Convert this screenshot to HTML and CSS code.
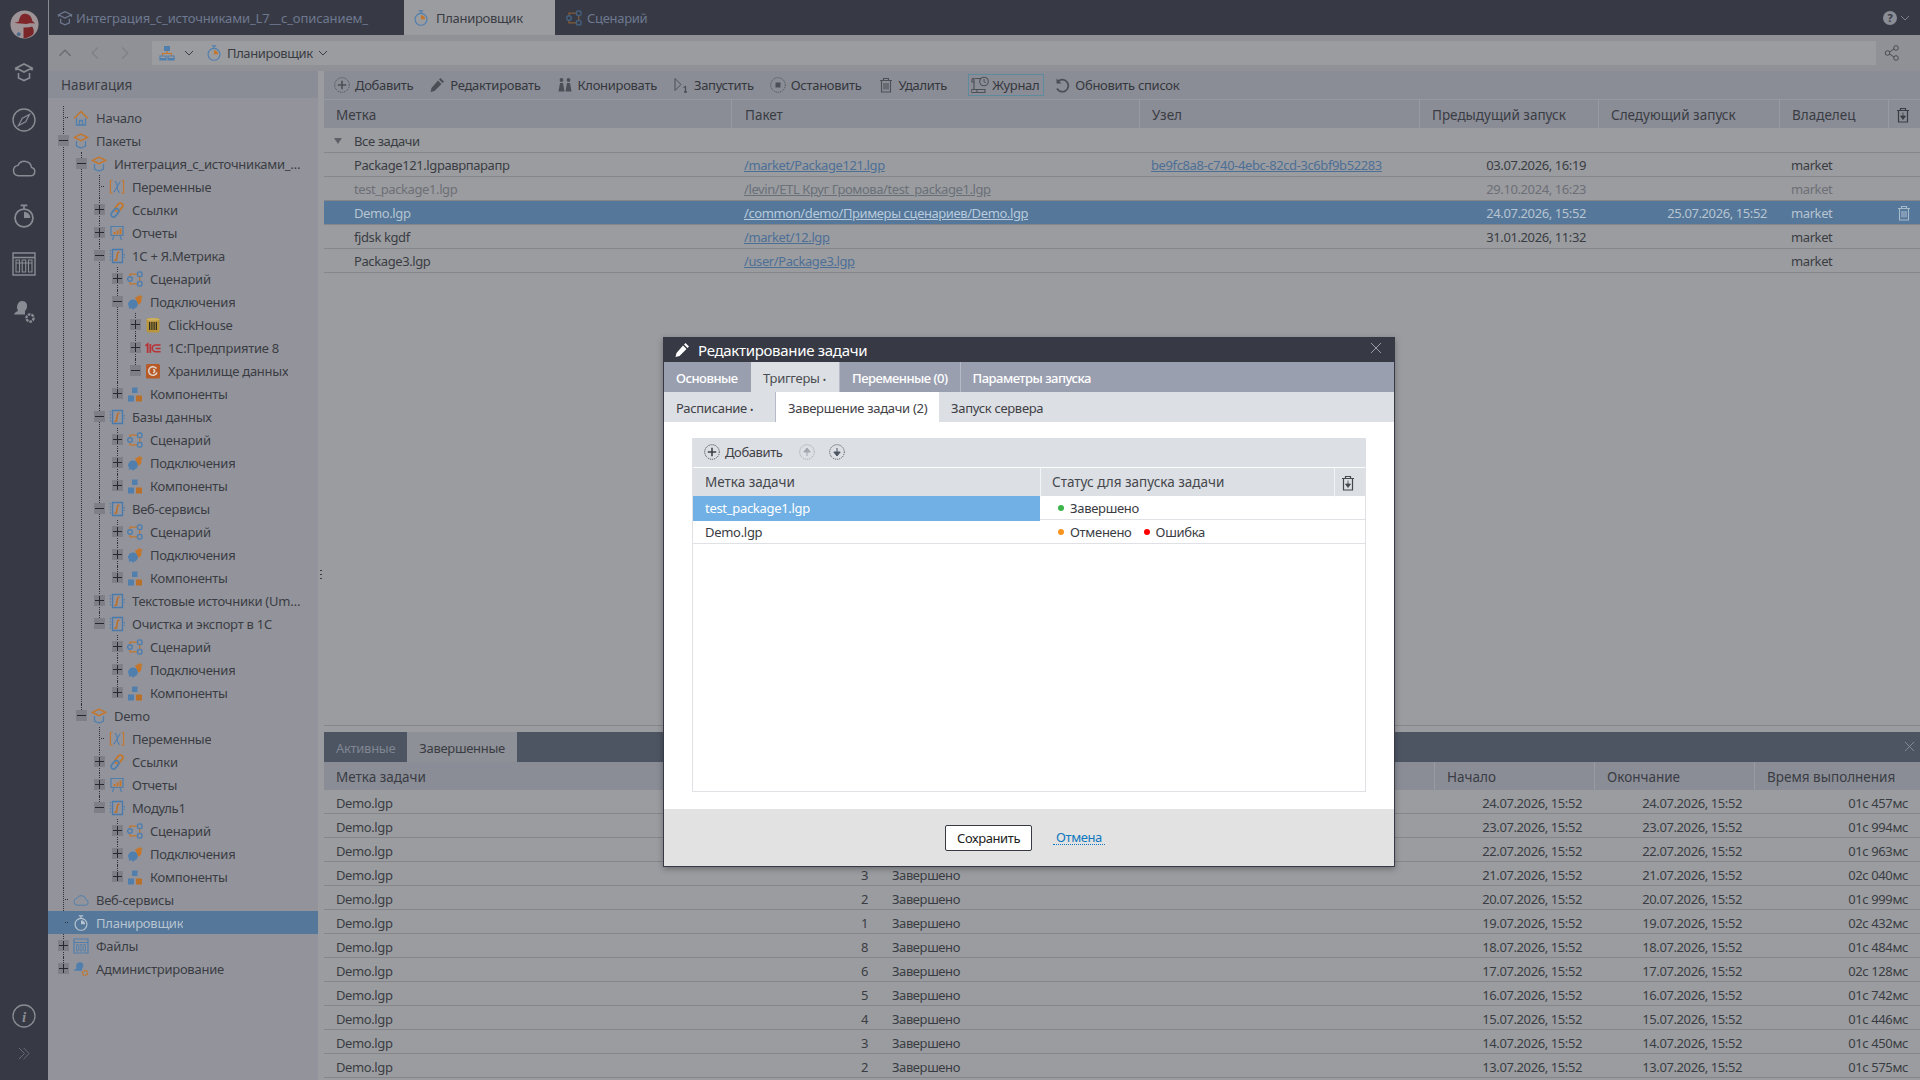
FILE: index.html
```html
<!DOCTYPE html>
<html lang="ru">

<head>
    <meta charset="UTF-8">
    <meta name="viewport" content="width=device-width, initial-scale=1.0">
    <title>Планировщик</title>
    <link rel="stylesheet" href="styles.css">
</head>

<body>
    <svg class="sprite" xmlns="http://www.w3.org/2000/svg">
        <symbol id="pack" viewBox="0 0 16 16"><path d="M1.500 4.300 8 1l6.500 3.300L8 7.600z" fill="none" stroke="#c4762c" stroke-width="1.500"/><path d="M3.500 8v5l4.500 2 4.500-2V8" fill="none" stroke="#507fae" stroke-width="1.300"/></symbol>
        <symbol id="home" viewBox="0 0 16 16"><path d="M1 8.500 8 1.500l7 7" fill="none" stroke="#c4762c" stroke-width="1.500"/><path d="M3.500 8v7h9V8M6.500 15v-4.500h3V15" fill="none" stroke="#507fae" stroke-width="1.300"/></symbol>
        <symbol id="vars" viewBox="0 0 18 16"><path d="M4 1H1.500v14H4M14 1h2.500v14H14" fill="none" stroke="#c4762c" stroke-width="1.300"/><path d="M5.500 14 12.500 2M6.500 2c2 0 2 1 2.500 5s1 7 3 7" fill="none" stroke="#507fae" stroke-width="1.300"/></symbol>
        <symbol id="link" viewBox="0 0 16 16"><rect x="7.500" y=".5" width="5" height="9.500" rx="2.500" transform="rotate(40 10 5.250)" fill="none" stroke="#c4762c" stroke-width="1.700"/><rect x="3.500" y="6" width="5" height="9.500" rx="2.500" transform="rotate(40 6 10.750)" fill="none" stroke="#507fae" stroke-width="1.700"/></symbol>
        <symbol id="report" viewBox="0 0 16 16"><path d="M1 1.500h14M2 2v8.500h12V2M5 10.500 3.500 15M11 10.500l1.500 4.500" fill="none" stroke="#507fae" stroke-width="1.200"/><path d="M4.500 7h2v2.500h-2zM7.500 5.500h2v4h-2zM10.500 3.500h2v6h-2z" fill="#c4762c"/></symbol>
        <symbol id="module" viewBox="0 0 16 16"><path d="M3.500 1.500h10v13h-10z" fill="none" stroke="#4a7aab" stroke-width="1.400"/><path d="M1.300 2v12M15.300 6v4" stroke="#4a7aab" stroke-dasharray="1.500 1.500"/><path d="M10.500 4.300C8.800 3.700 8.500 5 8.300 6.500L7.700 10.500C7.400 12 7 12.700 5.500 12" fill="none" stroke="#bf6d22" stroke-width="1.500"/></symbol>
        <symbol id="flow" viewBox="0 0 16 16"><path d="M3 5V3.200h7M3 11v1.800h7M12.700 6v4" fill="none" stroke="#c4762c" stroke-width="1.300"/><circle cx="3" cy="8" r="2.300" fill="none" stroke="#507fae" stroke-width="1.500"/><rect x="10.500" y="1" width="4.500" height="4.500" rx="1.600" fill="none" stroke="#507fae" stroke-width="1.500"/><rect x="10.500" y="10.500" width="4.500" height="4.500" rx="1.600" fill="none" stroke="#507fae" stroke-width="1.500"/></symbol>
        <symbol id="plug" viewBox="0 0 16 16"><path d="M8 3.500c2-.5 3.500-1 4.500-3 .3 1.200 1 1.800 3 2-1 1.500-1.200 3-1.200 4.500 0 2-1.500 3.500-3.300 3.500z" fill="#c4762c"/><circle cx="6" cy="10.200" r="4.800" fill="#507fae"/><path d="M2 14.500l1.500-1.500M1 10h2M6 15.500V14" stroke="#507fae" stroke-width="1.500"/></symbol>
        <symbol id="click" viewBox="0 0 16 16"><rect x="1.500" y="1" width="13" height="14.500" rx="2.200" fill="#b9953c"/><ellipse cx="8" cy="2.400" rx="6.500" ry="1.400" fill="#cdb060"/><path d="M4.500 5v8M6.200 5v8M8 5v8M9.800 5v8M11.500 5v8" stroke="#2f2c22"/></symbol>
        <symbol id="onec" viewBox="0 0 18 16"><path d="M.5 5.500 3 3.500V13.500" fill="none" stroke="#b83236" stroke-width="2"/><path d="M6 3.500V13.500" stroke="#b83236" stroke-width="2"/><path d="M17.500 4.500H12a3.800 3.800 0 0 0 0 7.600h5.500M17.500 8.500H12" fill="none" stroke="#b83236" stroke-width="1.700"/></symbol>
        <symbol id="store" viewBox="0 0 16 16"><rect x="1" y="1" width="14" height="14.500" rx="1.500" fill="#b85a26"/><path d="M11.500 5.500A4.300 4.300 0 1 0 12 9.500M8 6.500c2.300 0 2.300 3 0 3" fill="none" stroke="#dfd0c8" stroke-width="1.600"/></symbol>
        <symbol id="comps" viewBox="0 0 16 16"><path d="M5 1.500h5.500V7H5zM1 9.500h6v6H1z" fill="#507fae"/><path d="M9 9.500h6v6H9z" fill="#b9702a"/></symbol>
        <symbol id="cloud" viewBox="0 0 20 16"><path d="M5 14.500h10.500a3.500 3.500 0 0 0 .8-6.900A6 6 0 0 0 5 5.800a4.400 4.400 0 0 0 0 8.700z" fill="none" stroke="currentColor" stroke-width="1.200"/></symbol>
        <symbol id="timer" viewBox="0 0 16 18"><circle cx="8" cy="10.500" r="6.700" fill="none" stroke="currentColor" stroke-width="1.300"/><path d="M5.500 1h5M8 1v2.500" fill="none" stroke="currentColor" stroke-width="1.300"/><path d="M8 10.500V5.800a4.700 4.700 0 0 1 4.700 4.700z" style="fill:var(--sec,currentColor)"/></symbol>
        <symbol id="files" viewBox="0 0 16 16"><path d="M1 1h14v14H1zM1 4.500h14" fill="none" stroke="#507fae" stroke-width="1.200"/><path d="M3.500 6.500h1.800v6.500H3.500zM7.100 6.500h1.800v6.500H7.100zM10.700 6.500h1.800v6.500h-1.800z" fill="none" stroke="#507fae" stroke-width=".8"/></symbol>
        <symbol id="admin" viewBox="0 0 18 18"><path d="M8 1.500c3 0 4 2 3.500 4.500-.3 1.500-1 2.500-1.500 3v2H1c.5-1.500 2-2 3-2.500L3.500 6C3.500 3 5.500 1.500 8 1.500z" fill="#507fae"/><circle cx="13.500" cy="13.500" r="2.800" fill="none" stroke="#c4762c" stroke-width="1.800" stroke-dasharray="2 .8"/></symbol>
        <symbol id="pack-mono" viewBox="0 0 20 20"><path d="M2 6 10 2l8 4-8 4zM2 6v2.500M18 6v2.500" fill="none" stroke="currentColor" stroke-width="1.600"/><path d="M4.500 11v5l5.500 2.500 5.500-2.500v-5" fill="none" stroke="currentColor" stroke-width="1.600"/></symbol>
        <symbol id="compass" viewBox="0 0 24 24"><circle cx="12" cy="12" r="11" fill="none" stroke="currentColor" stroke-width="1.400"/><path d="M17.500 6.500 13.700 13.700 6.500 17.500 10.300 10.300z" fill="none" stroke="currentColor" stroke-width="1.200"/></symbol>
        <symbol id="table" viewBox="0 0 24 24"><path d="M1 1h22v22H1zM1 5.500h22" fill="none" stroke="currentColor" stroke-width="1.400"/><path d="M4 8h3.500v12H4zM10.200 8h3.500v12h-3.500zM16.500 8H20v12h-3.500zM4 11h16" fill="none" stroke="currentColor" stroke-width="1.100"/></symbol>
        <symbol id="admin-mono" viewBox="0 0 24 24"><path d="M10 1c4 0 5.500 3 5 6-.3 2-1.200 3-2 4v3.500H2c.5-2 2.500-2.800 4-3.500L5 8C5 4 7 1 10 1z" fill="currentColor"/><circle cx="18" cy="18" r="3.600" fill="none" stroke="currentColor" stroke-width="2.400" stroke-dasharray="2.600 1"/></symbol>
        <symbol id="add" viewBox="0 0 16 16"><circle cx="8" cy="8" r="7.300" fill="none" stroke="currentColor" stroke-dasharray="1.100 1"/><path d="M8 3.800v8.400M3.800 8h8.400" stroke="currentColor" stroke-width="1.600"/></symbol>
        <symbol id="edit" viewBox="0 0 16 16"><path d="M11.500 1 15 4.500l-1.500 1.500L10 2.500zM9 3.500 12.500 7l-7 7L1.500 15l1-4z" fill="currentColor"/></symbol>
        <symbol id="clone" viewBox="0 0 16 16"><circle cx="4.500" cy="3" r="1.900" fill="currentColor"/><circle cx="11.500" cy="3" r="1.900" fill="currentColor"/><path d="M3 6h3l1.500 8.500h-6zM10 6h3l1.500 8.500h-6z" fill="currentColor"/></symbol>
        <symbol id="run" viewBox="0 0 16 16"><path d="M2 1.500 8 7.500 2 13.500z" fill="none" stroke="currentColor"/><path d="M10.500 10.500 12.500 9.500v5.500M11 15h3" fill="none" stroke="currentColor" stroke-width="1.300"/></symbol>
        <symbol id="stop" viewBox="0 0 16 16"><circle cx="8" cy="8" r="7.300" fill="none" stroke="currentColor" stroke-dasharray="1.100 1"/><rect x="5.500" y="5.500" width="5" height="5" fill="currentColor"/></symbol>
        <symbol id="trash" viewBox="0 0 16 16"><path d="M2 3.500h12M5.500 3.500V1.500h5v2M3.500 3.500v11.500h9V3.500M6 6v6.500M8 6v6.500M10 6v6.500" fill="none" stroke="currentColor" stroke-width="1.100"/></symbol>
        <symbol id="trash-down" viewBox="0 0 16 16"><path d="M2 3.500h12M5.500 3.500V1.500h5v2M3.500 3.500v11.500h9V3.500" fill="none" stroke="currentColor" stroke-width="1.200"/><path d="M8 5.500v4M5.500 9h5L8 12.500z" fill="currentColor" stroke="currentColor" stroke-width=".8"/></symbol>
        <symbol id="journal" viewBox="0 0 18 18"><path d="M4 2.500h6M3 2.500v11M3 2.500a1.500 1.500 0 0 0-2 1.500v2h2M6 13.500v3H1.500a1.500 1.500 0 0 1 0-3H14v3H6" fill="none" stroke="currentColor" stroke-width="1.100"/><circle cx="13" cy="5.500" r="4.300" fill="#8a8d96" stroke="currentColor" stroke-width="1.100"/><path d="M13 3v2.800l1.800 1" fill="none" stroke="currentColor"/></symbol>
        <symbol id="refresh" viewBox="0 0 16 16"><path d="M4 4.500a6 6 0 1 1-1 7" fill="none" stroke="currentColor" stroke-width="1.800"/><path d="M2.500 1.500v5h5z" fill="currentColor"/></symbol>
        <symbol id="struct" viewBox="0 0 16 16"><path d="M5 1h6v5H5z" fill="#507fae"/><path d="M8 6v2.500M3.500 11V8.500h9V11" fill="none" stroke="#c4762c" stroke-width="1.100"/><path d="M1 11h6v4H1zM9 11h6v4H9z" fill="none" stroke="#507fae" stroke-width="1.200"/><path d="M1 13h6v2H1zM9 13h6v2H9z" fill="#507fae"/></symbol>
        <symbol id="share" viewBox="0 0 16 16"><circle cx="3.500" cy="8" r="2.300" fill="none" stroke="currentColor"/><circle cx="12" cy="3" r="2.300" fill="none" stroke="currentColor"/><circle cx="12" cy="13" r="2.300" fill="none" stroke="currentColor"/><path d="M5.500 7 10 4M5.500 9l4.500 3" stroke="currentColor"/></symbol>
        <symbol id="chev-down" viewBox="0 0 10 10"><path d="M1 3l4 4 4-4" fill="none" stroke="currentColor"/></symbol>
        <symbol id="arrow-up" viewBox="0 0 16 16"><circle cx="8" cy="8" r="7.300" fill="none" stroke="currentColor" stroke-dasharray="1.100 1"/><path d="M8 12V7M4.800 8 8 4l3.200 4z" fill="currentColor" stroke="currentColor"/></symbol>
        <symbol id="arrow-down" viewBox="0 0 16 16"><circle cx="8" cy="8" r="7.300" fill="none" stroke="currentColor" stroke-dasharray="1.100 1"/><path d="M8 4v5M4.800 8 8 12l3.200-4z" fill="currentColor" stroke="currentColor"/></symbol>
        <symbol id="cross" viewBox="0 0 12 12"><path d="M1 1l10 10M11 1 1 11" fill="none" stroke="currentColor"/></symbol>
    </svg>

    <!-- левая полоса -->
    <aside class="rail">
        <svg class="rail_logo" viewBox="0 0 30 30">
            <circle cx="15" cy="15" r="14.500" fill="#9e9497"/>
            <path d="M4 13c2 0 4 0 5-1 1-5 3-8 6-8 4 0 7 2 8 7l3 3c-3-.5-7-.5-9 .5-3 0-9-.5-13-1.500z" fill="#7e2629"/>
            <path d="M14 18c3 .5 6 0 9-1 2 3 2 6 1 8-3 3-7 4-10 4z" fill="#7a2629"/>
            <circle cx="9" cy="25" r="2" fill="#4d6a8a"/>
        </svg>
        <a class="rail_item"><svg class="icon_20"><use href="#pack-mono"/></svg></a>
        <a class="rail_item"><svg class="icon_24"><use href="#compass"/></svg></a>
        <a class="rail_item"><svg class="icon_24"><use href="#cloud"/></svg></a>
        <a class="rail_item"><svg class="icon_24"><use href="#timer"/></svg></a>
        <a class="rail_item"><svg class="icon_24"><use href="#table"/></svg></a>
        <a class="rail_item"><svg class="icon_24"><use href="#admin-mono"/></svg></a>
        <div class="rail_bottom">
            <svg class="icon_24" viewBox="0 0 24 24">
                <circle cx="12" cy="12" r="11" fill="none" stroke="currentColor" stroke-width="1.300"/>
                <text x="12" y="17.500" text-anchor="middle" class="info_i">i</text>
            </svg>
            <svg class="rail_more" viewBox="0 0 14 14"><path d="M1 1l6 6-6 6M6 1l6 6-6 6" fill="none" stroke="currentColor"/></svg>
        </div>
    </aside>

    <div class="app">
        <div class="tabs">
            <div class="tab first"><svg class="icon_16"><use href="#pack-mono"/></svg><span>Интеграция_с_источниками_L7__с_описанием_</span></div>
            <div class="tab current"><svg class="icon_16 planner"><use href="#timer"/></svg><span>Планировщик</span></div>
            <div class="tab last"><svg class="icon_16 dim"><use href="#flow"/></svg><span>Сценарий</span></div>
            <div class="tabs_help"><b>?</b><svg class="chev"><use href="#chev-down"/></svg></div>
        </div>

        <div class="address">
            <div class="address_nav">
                <svg class="chev big up"><use href="#chev-down"/></svg>
                <svg class="chev big left"><use href="#chev-down"/></svg>
                <svg class="chev big right"><use href="#chev-down"/></svg>
            </div>
            <div class="address_bar">
                <svg class="icon_16"><use href="#struct"/></svg>
                <svg class="chev first_chev"><use href="#chev-down"/></svg>
                <svg class="icon_16 planner"><use href="#timer"/></svg>
                <span>Планировщик</span>
                <svg class="chev"><use href="#chev-down"/></svg>
            </div>
            <svg class="icon_16 share"><use href="#share"/></svg>
        </div>

        <div class="workspace">
            <nav class="nav">
                <div class="nav_title">Навигация</div>
                <ul class="tree">
                    <li><div class="node"><i class="stub"></i><svg class="ic"><use href="#home"/></svg><span>Начало</span></div></li>
                    <li><div class="node"><i class="tog minus"></i><svg class="ic"><use href="#pack"/></svg><span>Пакеты</span></div>
                        <ul>
                            <li><div class="node"><i class="tog minus"></i><svg class="ic"><use href="#pack"/></svg><span>Интеграция_с_источниками_L7__с_описанием_</span></div>
                                <ul>
                                    <li><div class="node"><i class="stub"></i><svg class="ic"><use href="#vars"/></svg><span>Переменные</span></div></li>
                                    <li><div class="node"><i class="tog"></i><svg class="ic"><use href="#link"/></svg><span>Ссылки</span></div></li>
                                    <li><div class="node"><i class="tog"></i><svg class="ic"><use href="#report"/></svg><span>Отчеты</span></div></li>
                                    <li><div class="node"><i class="tog minus"></i><svg class="ic"><use href="#module"/></svg><span>1С + Я.Метрика</span></div>
                                        <ul>
                                            <li><div class="node"><i class="tog"></i><svg class="ic"><use href="#flow"/></svg><span>Сценарий</span></div></li>
                                            <li><div class="node"><i class="tog minus"></i><svg class="ic"><use href="#plug"/></svg><span>Подключения</span></div>
                                                <ul>
                                                    <li><div class="node"><i class="tog"></i><svg class="ic"><use href="#click"/></svg><span>ClickHouse</span></div></li>
                                                    <li><div class="node"><i class="tog"></i><svg class="ic"><use href="#onec"/></svg><span>1С:Предприятие 8</span></div></li>
                                                    <li><div class="node"><i class="tog minus"></i><svg class="ic"><use href="#store"/></svg><span>Хранилище данных</span></div></li>
                                                </ul>
                                            </li>
                                            <li><div class="node"><i class="tog"></i><svg class="ic"><use href="#comps"/></svg><span>Компоненты</span></div></li>
                                        </ul>
                                    </li>
                                    <li><div class="node"><i class="tog minus"></i><svg class="ic"><use href="#module"/></svg><span>Базы данных</span></div>
                                        <ul>
                                            <li><div class="node"><i class="tog"></i><svg class="ic"><use href="#flow"/></svg><span>Сценарий</span></div></li>
                                            <li><div class="node"><i class="tog"></i><svg class="ic"><use href="#plug"/></svg><span>Подключения</span></div></li>
                                            <li><div class="node"><i class="tog"></i><svg class="ic"><use href="#comps"/></svg><span>Компоненты</span></div></li>
                                        </ul>
                                    </li>
                                    <li><div class="node"><i class="tog minus"></i><svg class="ic"><use href="#module"/></svg><span>Веб-сервисы</span></div>
                                        <ul>
                                            <li><div class="node"><i class="tog"></i><svg class="ic"><use href="#flow"/></svg><span>Сценарий</span></div></li>
                                            <li><div class="node"><i class="tog"></i><svg class="ic"><use href="#plug"/></svg><span>Подключения</span></div></li>
                                            <li><div class="node"><i class="tog"></i><svg class="ic"><use href="#comps"/></svg><span>Компоненты</span></div></li>
                                        </ul>
                                    </li>
                                    <li><div class="node"><i class="tog"></i><svg class="ic"><use href="#module"/></svg><span>Текстовые источники (Umbrella)</span></div></li>
                                    <li><div class="node"><i class="tog minus"></i><svg class="ic"><use href="#module"/></svg><span>Очистка и экспорт в 1С</span></div>
                                        <ul>
                                            <li><div class="node"><i class="tog"></i><svg class="ic"><use href="#flow"/></svg><span>Сценарий</span></div></li>
                                            <li><div class="node"><i class="tog"></i><svg class="ic"><use href="#plug"/></svg><span>Подключения</span></div></li>
                                            <li><div class="node"><i class="tog"></i><svg class="ic"><use href="#comps"/></svg><span>Компоненты</span></div></li>
                                        </ul>
                                    </li>
                                </ul>
                            </li>
                            <li><div class="node"><i class="tog minus"></i><svg class="ic"><use href="#pack"/></svg><span>Demo</span></div>
                                <ul>
                                    <li><div class="node"><i class="stub"></i><svg class="ic"><use href="#vars"/></svg><span>Переменные</span></div></li>
                                    <li><div class="node"><i class="tog"></i><svg class="ic"><use href="#link"/></svg><span>Ссылки</span></div></li>
                                    <li><div class="node"><i class="tog"></i><svg class="ic"><use href="#report"/></svg><span>Отчеты</span></div></li>
                                    <li><div class="node"><i class="tog minus"></i><svg class="ic"><use href="#module"/></svg><span>Модуль1</span></div>
                                        <ul>
                                            <li><div class="node"><i class="tog"></i><svg class="ic"><use href="#flow"/></svg><span>Сценарий</span></div></li>
                                            <li><div class="node"><i class="tog"></i><svg class="ic"><use href="#plug"/></svg><span>Подключения</span></div></li>
                                            <li><div class="node"><i class="tog"></i><svg class="ic"><use href="#comps"/></svg><span>Компоненты</span></div></li>
                                        </ul>
                                    </li>
                                </ul>
                            </li>
                        </ul>
                    </li>
                    <li><div class="node"><i class="stub"></i><svg class="ic tree_blue"><use href="#cloud"/></svg><span>Веб-сервисы</span></div></li>
                    <li><div class="node current"><i class="stub"></i><svg class="ic"><use href="#timer"/></svg><span>Планировщик</span></div></li>
                    <li><div class="node"><i class="tog"></i><svg class="ic"><use href="#files"/></svg><span>Файлы</span></div></li>
                    <li><div class="node"><i class="tog"></i><svg class="ic"><use href="#admin"/></svg><span>Администрирование</span></div></li>
                </ul>
            </nav>

            <div class="splitter"></div>

            <main class="main">
                <section class="jobs">
                    <div class="toolbar">
                        <a class="tool"><svg class="icon_16"><use href="#add"/></svg>Добавить</a>
                        <a class="tool"><svg class="icon_16"><use href="#edit"/></svg>Редактировать</a>
                        <a class="tool"><svg class="icon_16"><use href="#clone"/></svg>Клонировать</a>
                        <a class="tool"><svg class="icon_16"><use href="#run"/></svg>Запустить</a>
                        <a class="tool"><svg class="icon_16"><use href="#stop"/></svg>Остановить</a>
                        <a class="tool"><svg class="icon_16"><use href="#trash"/></svg>Удалить</a>
                        <a class="tool pressed"><svg class="icon_18"><use href="#journal"/></svg>Журнал</a>
                        <a class="tool"><svg class="icon_16"><use href="#refresh"/></svg>Обновить список</a>
                    </div>
                    <div class="row head jobs_cols">
                        <div>Метка</div><div>Пакет</div><div>Узел</div><div>Предыдущий запуск</div><div>Следующий запуск</div><div>Владелец</div>
                        <div class="cell_icon"><svg class="icon_16"><use href="#trash-down"/></svg></div>
                    </div>
                    <div class="row group"><i class="caret"></i>Все задачи</div>
                    <div class="row jobs_cols">
                        <div class="indent">Package121.lgpаврпарапр</div><div><a href="#">/market/Package121.lgp</a></div><div><a href="#">be9fc8a8-c740-4ebc-82cd-3c6bf9b52283</a></div><div class="num">03.07.2026, 16:19</div><div></div><div>market</div><div></div>
                    </div>
                    <div class="row jobs_cols muted">
                        <div class="indent">test_package1.lgp</div><div><a href="#">/levin/ETL Круг Громова/test_package1.lgp</a></div><div></div><div class="num">29.10.2024, 16:23</div><div></div><div>market</div><div></div>
                    </div>
                    <div class="row jobs_cols selected">
                        <div class="indent">Demo.lgp</div><div><a href="#">/common/demo/Примеры сценариев/Demo.lgp</a></div><div></div><div class="num">24.07.2026, 15:52</div><div class="num">25.07.2026, 15:52</div><div>market</div>
                        <div class="cell_icon"><svg class="icon_16"><use href="#trash"/></svg></div>
                    </div>
                    <div class="row jobs_cols">
                        <div class="indent">fjdsk kgdf</div><div><a href="#">/market/12.lgp</a></div><div></div><div class="num">31.01.2026, 11:32</div><div></div><div>market</div><div></div>
                    </div>
                    <div class="row jobs_cols">
                        <div class="indent">Package3.lgp</div><div><a href="#">/user/Package3.lgp</a></div><div></div><div></div><div></div><div>market</div><div></div>
                    </div>
                </section>

                <section class="history">
                    <div class="history_tabs">
                        <div class="history_tab">Активные</div>
                        <div class="history_tab current">Завершенные</div>
                        <svg class="history_close"><use href="#cross"/></svg>
                    </div>
                    <div class="row head history_cols">
                        <div>Метка задачи</div><div></div><div></div><div>Начало</div><div>Окончание</div><div>Время выполнения</div>
                    </div>
                    <div class="row history_cols"><div>Demo.lgp</div><div></div><div></div><div class="num">24.07.2026, 15:52</div><div class="num">24.07.2026, 15:52</div><div class="num">01с 457мс</div></div>
                    <div class="row history_cols"><div>Demo.lgp</div><div></div><div></div><div class="num">23.07.2026, 15:52</div><div class="num">23.07.2026, 15:52</div><div class="num">01с 994мс</div></div>
                    <div class="row history_cols"><div>Demo.lgp</div><div></div><div></div><div class="num">22.07.2026, 15:52</div><div class="num">22.07.2026, 15:52</div><div class="num">01с 963мс</div></div>
                    <div class="row history_cols"><div>Demo.lgp</div><div class="num">3</div><div>Завершено</div><div class="num">21.07.2026, 15:52</div><div class="num">21.07.2026, 15:52</div><div class="num">02с 040мс</div></div>
                    <div class="row history_cols"><div>Demo.lgp</div><div class="num">2</div><div>Завершено</div><div class="num">20.07.2026, 15:52</div><div class="num">20.07.2026, 15:52</div><div class="num">01с 999мс</div></div>
                    <div class="row history_cols"><div>Demo.lgp</div><div class="num">1</div><div>Завершено</div><div class="num">19.07.2026, 15:52</div><div class="num">19.07.2026, 15:52</div><div class="num">02с 432мс</div></div>
                    <div class="row history_cols"><div>Demo.lgp</div><div class="num">8</div><div>Завершено</div><div class="num">18.07.2026, 15:52</div><div class="num">18.07.2026, 15:52</div><div class="num">01с 484мс</div></div>
                    <div class="row history_cols"><div>Demo.lgp</div><div class="num">6</div><div>Завершено</div><div class="num">17.07.2026, 15:52</div><div class="num">17.07.2026, 15:52</div><div class="num">02с 128мс</div></div>
                    <div class="row history_cols"><div>Demo.lgp</div><div class="num">5</div><div>Завершено</div><div class="num">16.07.2026, 15:52</div><div class="num">16.07.2026, 15:52</div><div class="num">01с 742мс</div></div>
                    <div class="row history_cols"><div>Demo.lgp</div><div class="num">4</div><div>Завершено</div><div class="num">15.07.2026, 15:52</div><div class="num">15.07.2026, 15:52</div><div class="num">01с 446мс</div></div>
                    <div class="row history_cols"><div>Demo.lgp</div><div class="num">3</div><div>Завершено</div><div class="num">14.07.2026, 15:52</div><div class="num">14.07.2026, 15:52</div><div class="num">01с 450мс</div></div>
                    <div class="row history_cols"><div>Demo.lgp</div><div class="num">2</div><div>Завершено</div><div class="num">13.07.2026, 15:52</div><div class="num">13.07.2026, 15:52</div><div class="num">01с 575мс</div></div>
                </section>
            </main>
        </div>
    </div>

    <!-- окно редактирования -->
    <div class="modal">
        <div class="modal_head">
            <svg class="icon_16"><use href="#edit"/></svg>
            <span>Редактирование задачи</span>
            <svg class="modal_close"><use href="#cross"/></svg>
        </div>
        <div class="modal_tabs">
            <div class="mtab first">Основные</div>
            <div class="mtab current">Триггеры <small>•</small></div>
            <div class="mtab">Переменные (0)</div>
            <div class="mtab">Параметры запуска</div>
        </div>
        <div class="modal_subtabs">
            <div class="stab first">Расписание <small>•</small></div>
            <div class="stab current">Завершение задачи (2)</div>
            <div class="stab">Запуск сервера</div>
        </div>
        <div class="modal_body">
            <div class="list">
                <div class="list_tools">
                    <a class="list_add"><svg class="icon_16"><use href="#add"/></svg>Добавить</a>
                    <svg class="icon_16 off"><use href="#arrow-up"/></svg>
                    <svg class="icon_16"><use href="#arrow-down"/></svg>
                </div>
                <div class="list_row list_head">
                    <div>Метка задачи</div><div>Статус для запуска задачи</div>
                    <div class="cell_icon"><svg class="icon_16"><use href="#trash-down"/></svg></div>
                </div>
                <div class="list_row">
                    <div class="picked">test_package1.lgp</div>
                    <div class="statuses"><span class="status ok">Завершено</span></div><div></div>
                </div>
                <div class="list_row">
                    <div>Demo.lgp</div>
                    <div class="statuses"><span class="status warn">Отменено</span><span class="status err">Ошибка</span></div><div></div>
                </div>
            </div>
        </div>
        <div class="modal_foot">
            <button class="btn">Сохранить</button>
            <a class="cancel" href="#">Отмена</a>
        </div>
    </div>
</body>

</html>
```

FILE: styles.css
```css
* {
    margin: 0;
    padding: 0;
    box-sizing: border-box;
}

li {
    list-style: none;
}

a {
    color: inherit;
}

body {
    display: flex;
    width: 1920px;
    height: 1080px;
    overflow: hidden;
    position: relative;
    font: 13px/18px "Noto Sans", sans-serif;
    letter-spacing: -.3px;
    color: #3a3c43;
    background-color: #9b9ca0;
}

.sprite {
    display: none;
}

svg {
    flex: none;
}

.icon_16 {
    width: 16px;
    height: 16px;
}

.icon_18 {
    width: 18px;
    height: 18px;
}

.icon_20 {
    width: 20px;
    height: 20px;
}

.icon_24 {
    width: 24px;
    height: 24px;
}

/* левая полоса */
.rail {
    display: flex;
    flex-direction: column;
    align-items: center;
    width: 48px;
    height: 100%;
    background-color: #373a44;
    color: #8a8c94;
}

.rail_logo {
    width: 29px;
    height: 29px;
    margin: 10px 0 9px;
}

.rail_item {
    display: flex;
    align-items: center;
    justify-content: center;
    width: 48px;
    height: 48px;
}

.rail_bottom {
    display: flex;
    flex-direction: column;
    align-items: center;
    margin-top: auto;
    padding-bottom: 20px;
    gap: 19px;
}

.info_i {
    font: italic bold 15px "Liberation Serif", serif;
    fill: currentColor;
}

.rail_more {
    width: 13px;
    height: 13px;
    color: #6d7080;
}

.app {
    display: flex;
    flex-direction: column;
    flex: 1;
    min-width: 0;
}

/* вкладки */
.tabs {
    display: flex;
    height: 35px;
    background-color: #373a44;
    border-left: 1px solid #8a8c94;
}

.tab {
    display: flex;
    align-items: center;
    gap: 5px;
    padding: 0 11px;
    color: #6e7890;
}

.tab.first {
    width: 355px;
    padding-left: 8px;
    gap: 3px;
    letter-spacing: -.12px;
}

.tab.current {
    width: 151px;
    padding-left: 9px;
    gap: 7px;
    color: #3a3c43;
    background-color: #9b9ca0;
}

.planner {
    color: #507fae;
    --sec: #c4762c;
}

.dim {
    opacity: .55;
}

.tabs_help {
    display: flex;
    align-items: center;
    gap: 3px;
    margin-left: auto;
    padding-right: 10px;
    color: #7d808c;
}

.tabs_help b {
    width: 14px;
    height: 14px;
    border-radius: 50%;
    line-height: 14px;
    font-size: 11px;
    text-align: center;
    color: #373a44;
    background-color: #8a8c96;
}

.chev {
    width: 10px;
    height: 10px;
}

.chev.big {
    width: 14px;
    height: 14px;
    color: #6a6c73;
}

.chev.up {
    transform: rotate(180deg);
}

.chev.left {
    transform: rotate(90deg);
    color: #7f8187;
}

.chev.right {
    transform: rotate(-90deg);
    color: #7f8187;
}

/* адресная строка */
.address {
    display: flex;
    align-items: center;
    height: 36px;
    background-color: #909196;
}

.address_nav {
    display: flex;
    gap: 16px;
    width: 104px;
    padding-left: 10px;
}

.address_bar {
    display: flex;
    align-items: center;
    flex: 1;
    height: 24px;
    padding-left: 7px;
    gap: 5px;
    letter-spacing: -.4px;
    background-color: #9b9ca0;
}

.address_bar .first_chev {
    margin: 0 7px 0 4px;
}

.share {
    margin: 0 20px 0 8px;
    color: #4a4c52;
}

.workspace {
    display: flex;
    flex: 1;
    min-height: 0;
}

/* дерево */
.nav {
    width: 270px;
    background-color: #93949b;
}

.nav_title {
    height: 27px;
    padding-left: 13px;
    line-height: 28px;
    font-size: 13.5px;
    letter-spacing: 0;
    background-color: #8a8d96;
}

.tree {
    padding-top: 8px;
    letter-spacing: -.25px;
}

.tree ul {
    margin-left: 18px;
}

.tree li {
    position: relative;
}

.tree li::before {
    content: '';
    position: absolute;
    left: 15px;
    top: 0;
    bottom: 0;
    border-left: 1px dotted #2e3036;
}

.tree li:last-child::before {
    bottom: auto;
    height: 12px;
}

.node {
    display: flex;
    align-items: center;
    height: 23px;
    padding: 0 12px 0 10px;
    position: relative;
}

.node span {
    overflow: hidden;
    white-space: nowrap;
    text-overflow: ellipsis;
}

.node.current {
    color: #b8c4d0;
    background-color: #54779a;
}

.tog {
    flex: none;
    width: 11px;
    height: 11px;
    margin-right: 4px;
    background: linear-gradient(#26282d, #26282d) center/9px 1px no-repeat, linear-gradient(#26282d, #26282d) center/1px 9px no-repeat, #7f8087;
}

.tog.minus {
    background: linear-gradient(#26282d, #26282d) center/9px 1px no-repeat, #7f8087;
}

.stub {
    flex: none;
    width: 11px;
    height: 1px;
    margin-right: 4px;
    background: linear-gradient(90deg, transparent 50%, #2e3036 50%) 0 0/2px 1px;
    clip-path: inset(0 0 0 6px);
}

.ic {
    width: 16px;
    height: 16px;
    margin-right: 7px;
}

.tree_blue {
    color: #507fae;
}

.splitter {
    display: flex;
    align-items: center;
    justify-content: center;
    width: 6px;
    background-color: #9b9ca0;
}

.splitter::before {
    content: '';
    width: 2px;
    height: 12px;
    background: repeating-linear-gradient(#3a3c43 0 1px, transparent 1px 4px);
}

.main {
    display: flex;
    flex-direction: column;
    flex: 1;
    min-width: 0;
}

/* задачи */
.jobs {
    flex: 1;
    border-bottom: 1px solid #84868c;
}

.toolbar {
    display: flex;
    align-items: center;
    gap: 16px;
    height: 29px;
    padding-left: 10px;
    background-color: #8a8d96;
    border-bottom: 1px solid #9498a0;
}

.tool {
    display: flex;
    align-items: center;
    gap: 5px;
    color: #35373d;
}

.tool svg {
    color: #4d4f56;
}

.tool.pressed {
    height: 22px;
    padding: 0 4px 0 2px;
    margin: 0 -6px 0 5px;
    gap: 3px;
    border: 1px solid #5d8a9c;
}

.row {
    display: grid;
    align-items: center;
    height: 24px;
    padding-top: 1px;
    letter-spacing: -.4px;
    border-bottom: 1px solid #84868c;
}

.row > div {
    padding: 0 12px;
    white-space: nowrap;
}

.row a {
    color: #4d6f96;
}

.row .num {
    text-align: right;
}

.row .indent {
    padding-left: 30px;
}

.head {
    height: 28px;
    padding-top: 0;
    border-bottom: 0;
    align-items: stretch;
    font-size: 13.5px;
    letter-spacing: 0;
    background-color: #8a8d96;
}

.head > div {
    line-height: 30px;
    border-left: 1px solid #979aa2;
}

.head > div:first-child {
    border-left: 0;
}

.jobs_cols {
    grid-template-columns: 407px 408px 280px 179px 181px 109px 1fr;
}

.jobs_cols > div:nth-child(2) {
    padding-left: 13px;
}

.cell_icon {
    display: flex;
    align-items: center;
    justify-content: center;
    padding: 0 !important;
}

.head .cell_icon {
    padding-right: 4px !important;
}

.group {
    display: flex;
    height: 25px;
    padding-left: 10px;
}

.caret {
    width: 0;
    height: 0;
    margin-right: 12px;
    border: 4px solid transparent;
    border-top: 6px solid #5f6169;
    border-bottom: 0;
}

.muted {
    color: #6d6f76;
}

.muted a {
    color: #697078;
}

.selected {
    color: #b8c4d0;
    background-color: #54779a;
}

.selected a {
    color: #b8cadb;
}

.selected .cell_icon {
    color: #a9bacb;
}

/* нижняя панель */
.history {
    flex: none;
    height: 348px;
    margin-top: 6px;
}

.history_tabs {
    display: flex;
    height: 30px;
    color: #7f8592;
    background-color: #4d5562;
}

.history_tab {
    padding: 1px 12px 0;
    line-height: 30px;
}

.history_tab.current {
    color: #3a3c43;
    background-color: #8e9097;
}

.history_close {
    width: 11px;
    height: 11px;
    margin: 9px 5px 0 auto;
    color: #8a8f99;
}

.history .row:not(.head) {
    padding-top: 3px;
}

.history_cols {
    grid-template-columns: 400px 156px 554px 160px 160px 1fr;
}

/* окно */
.modal {
    position: absolute;
    left: 663px;
    top: 337px;
    display: flex;
    flex-direction: column;
    width: 732px;
    height: 530px;
    border: 1px solid #373a44;
    border-top: 0;
    background-color: #fff;
    box-shadow: 0 2px 6px rgba(0, 0, 0, .3);
}

.modal_head {
    display: flex;
    align-items: center;
    height: 25px;
    margin: 0 -1px;
    padding: 1px 0 0 11px;
    gap: 8px;
    font-size: 15px;
    color: #fff;
    background-color: #373a44;
}

.modal_head .icon_16 {
    margin-top: -1px;
}

.modal_close {
    width: 12px;
    height: 12px;
    margin: 0 13px 4px auto;
    color: #9a9ca4;
}

.modal_tabs {
    display: flex;
    height: 30px;
    background-color: #9a9fb0;
}

.mtab {
    padding: 1px 12px 0;
    line-height: 30px;
    font-weight: 500;
    letter-spacing: -.5px;
    color: #fff;
    border-left: 1px solid #b6bac6;
}

.mtab.first {
    width: 87px;
    border-left: 0;
}

.mtab.current {
    width: 88px;
    border-left: 0;
    font-weight: 400;
    letter-spacing: -.3px;
    color: #4a4c52;
    background-color: #dcdfe3;
}

.mtab small,
.stab small {
    font-size: 9px;
}

.modal_subtabs {
    display: flex;
    height: 30px;
    color: #3f4147;
    background-color: #dcdfe3;
}

.stab {
    padding: 1px 12px 0;
    line-height: 30px;
    white-space: nowrap;
}

.stab.first {
    width: 111px;
}

.stab.current {
    width: 164px;
    background-color: #fff;
    border-left: 1px solid #b6bac6;
}

.modal_body {
    flex: 1;
    padding: 16px 28px 17px 28px;
}

.list {
    height: 100%;
    border: 1px solid #dfe1e4;
    border-top: 0;
}

.list_tools {
    display: flex;
    align-items: center;
    gap: 14px;
    height: 29px;
    margin: 0 -1px 1px;
    padding: 0 0 1px 12px;
    color: #4d5562;
    background-color: #dcdfe3;
}

.list_add {
    display: flex;
    align-items: center;
    gap: 5px;
    margin-right: 2px;
    letter-spacing: -.4px;
    color: #3f4147;
}

.off {
    opacity: .4;
}

.list_row {
    display: grid;
    grid-template-columns: 347px 294px 1fr;
    align-items: stretch;
    height: 24px;
    line-height: 25px;
    border-bottom: 1px solid #dfe1e4;
}

.list_row > div {
    padding: 0 12px;
}

.list_head {
    height: 28px;
    line-height: 29px;
    font-size: 13.5px;
    letter-spacing: 0;
    border-bottom: 0;
    color: #45474d;
    background-color: #dcdfe3;
}

.list_head > div + div {
    padding-left: 11px;
    border-left: 1px solid #f3f4f5;
}

.list_head .cell_icon {
    padding-right: 4px !important;
}

.list_row .picked {
    color: #fff;
    background-color: #70b0e4;
}

.statuses {
    display: flex;
    gap: 12px;
    padding-left: 18px !important;
}

.status::before {
    content: '';
    display: inline-block;
    width: 6px;
    height: 6px;
    margin-right: 6px;
    border-radius: 50%;
    vertical-align: 2px;
    background-color: #3cb54a;
}

.status.warn::before {
    background-color: #f7931e;
}

.status.err::before {
    background-color: #f00;
}

.modal_foot {
    display: flex;
    align-items: center;
    justify-content: center;
    height: 57px;
    padding-right: 8px;
    gap: 21px;
    background-color: #e2e2e2;
}

.btn {
    width: 87px;
    height: 26px;
    font: inherit;
    letter-spacing: -.4px;
    color: #222;
    background-color: #fff;
    border: 1px solid #373a44;
    border-radius: 2px;
}

.cancel {
    margin-top: 1px;
    padding: 0 3px;
    line-height: 13px;
    letter-spacing: -.4px;
    color: #1078c0;
    text-decoration: none;
    border-bottom: 1px dotted #1078c0;
}
```
